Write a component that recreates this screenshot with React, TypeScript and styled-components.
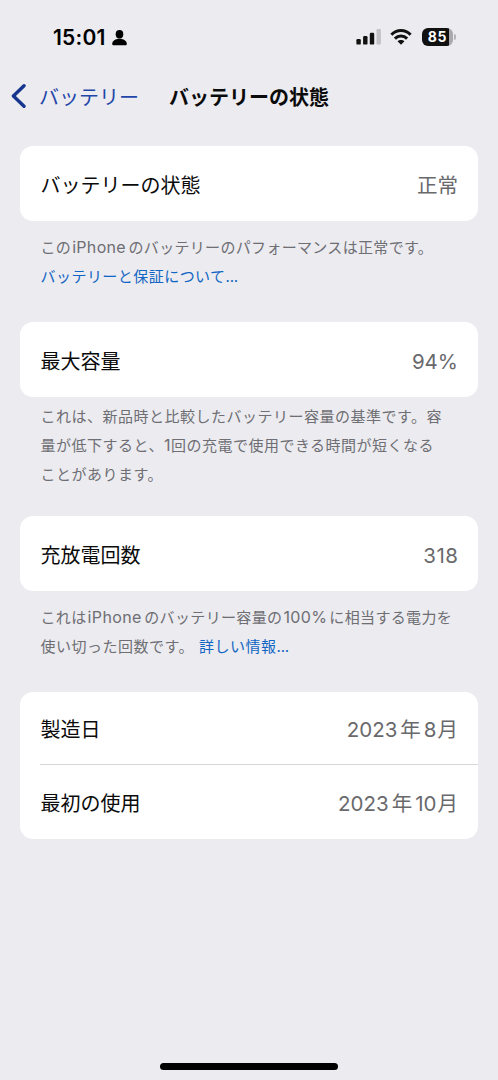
import React from 'react';
import styled, { createGlobalStyle } from 'styled-components';

const GlobalStyle = createGlobalStyle`
  * { box-sizing: border-box; }
  html, body { margin: 0; background: #ebebf0; }
  body {
    font-family: Inter, 'Noto Sans CJK JP', sans-serif;
    color: #0b0b0c;
  }
`;

const Screen = styled.div`
  width: 498px;
  height: 1080px;
  display: flex;
  flex-direction: column;
  background: #ebebf0;
  overflow: hidden;
`;

const StatusBar = styled.header`
  height: 74px;
  flex: none;
  display: flex;
  align-items: center;
  justify-content: space-between;
  padding: 0 42px 0 53px;
`;

const Clock = styled.div`
  display: flex;
  align-items: center;
  gap: 6px;
  padding-top: 1px;
  font-size: 21px;
  font-weight: 600;
  letter-spacing: 0.2px;
  line-height: 24px;
  color: #000;
`;

const StatusIcons = styled.div`
  display: flex;
  align-items: center;
  svg { display: block; }
`;

const WifiSlot = styled.div`
  margin-left: 9px;
`;

const BatteryBadge = styled.div`
  display: flex;
  align-items: center;
  gap: 1px;
  margin-left: 10px;
`;

const BatteryBody = styled.div`
  width: 31px;
  height: 18px;
  border-radius: 6px;
  display: flex;
  align-items: center;
  justify-content: center;
  background: linear-gradient(to right, #111 27px, #a9a9ad 27px);
  color: #fff;
  font-size: 14px;
  font-weight: 700;
  line-height: 18px;
  letter-spacing: 0.6px;
`;

const BatteryTip = styled.div`
  width: 2px;
  height: 6px;
  border-radius: 0 2px 2px 0;
  background: #b4b4b8;
`;

const NavBar = styled.nav`
  height: 44px;
  flex: none;
  display: flex;
  align-items: center;
  padding-left: 11px;
`;

const BackLink = styled.a`
  display: flex;
  align-items: center;
  gap: 13px;
  width: 158px;
  color: #1f46a8;
  font-size: 20px;
  line-height: 30px;
  white-space: nowrap;
  svg { display: block; flex: none; }
`;

const BackLabel = styled.span`
  padding-top: 3px;
`;

const Title = styled.h1`
  margin: 0;
  padding-top: 3px;
  font-size: 20px;
  font-weight: 700;
  line-height: 30px;
  white-space: nowrap;
  color: #0b0b0c;
`;

const Content = styled.main`
  flex: 1;
  padding: 28px 20px 0;
`;

const Section = styled.section<{ $after: number }>`
  margin-bottom: ${(p) => p.$after}px;
`;

const Card = styled.div`
  border-radius: 13px;
  background: #fff;
  padding-left: 20px;
`;

const Row = styled.div<{ $height: number; $divided?: boolean }>`
  height: ${(p) => p.$height}px;
  display: flex;
  align-items: center;
  justify-content: space-between;
  padding: 4px 20px 0 0.5px;
  border-bottom: ${(p) => (p.$divided ? '1px solid #d8d8da' : 'none')};
  font-size: 20px;
  line-height: 30px;
  white-space: nowrap;
`;

const Value = styled.span<{ $spacing?: number }>`
  color: #69696c;
  font-size: 20.5px;
  letter-spacing: ${(p) => p.$spacing ?? 0}px;
  margin-right: ${(p) => -(p.$spacing ?? 0)}px;
`;

const Note = styled.div<{ $top: number }>`
  padding: ${(p) => p.$top}px 0 0 20.5px;
  color: #6e6e73;
  font-size: 15px;
  line-height: 29px;
`;

const Line = styled.div<{ $spacing?: number }>`
  height: 29px;
  letter-spacing: ${(p) => p.$spacing ?? 0.5}px;
  white-space: nowrap;
`;

const Latin = styled.span<{ $before?: number; $after?: number; $size?: number }>`
  margin-left: ${(p) => p.$before ?? 0}px;
  margin-right: ${(p) => p.$after ?? 0}px;
  font-size: ${(p) => (p.$size ? `${p.$size}px` : 'inherit')};
`;

const Link = styled.a<{ $before?: number }>`
  margin-left: ${(p) => p.$before ?? 0}px;
  color: #1266c3;
`;

const Dots = styled.span`
  letter-spacing: -0.2px;
`;

const HomeIndicator = styled.div`
  flex: none;
  width: 178px;
  height: 7px;
  margin: 0 0 10px 160px;
  border-radius: 4px;
  background: #000;
`;

const PersonIcon = () => (
  <svg width="15" height="16" viewBox="0 0 15 16" fill="#000">
    <ellipse cx="7.5" cy="4.3" rx="3.8" ry="4.2" />
    <path d="M0.2 13.9C0.2 11 3.4 8.8 7.5 8.8s7.3 2.2 7.3 5.1c0 .9-.6 1.3-1.5 1.3H1.7C.8 15.2.2 14.8.2 13.9Z" />
  </svg>
);

const SignalIcon = () => (
  <svg width="25" height="16" viewBox="0 0 25 16" fill="#111">
    <rect x="0.4" y="10" width="4.4" height="5.6" rx="1.2" />
    <rect x="7.1" y="7" width="4.4" height="8.6" rx="1.2" />
    <rect x="13.8" y="3.7" width="4.4" height="11.9" rx="1.2" />
    <rect x="20.5" y="0" width="4.4" height="15.6" rx="1.2" fill="#c2c2c6" />
  </svg>
);

const WifiIcon = () => (
  <svg width="22" height="16" viewBox="0 0 22 16" fill="none" stroke="#111" strokeWidth="3">
    <path d="M1.4 5.8C6.7.2 15.3.2 20.6 5.8" />
    <path d="M4.9 9.6C8.3 6.2 13.7 6.2 17.1 9.6" />
    <path d="M11 15.8 7.5 12.3c1.9-1.8 5.1-1.8 7 0Z" fill="#111" stroke="none" />
  </svg>
);

const BackIcon = () => (
  <svg width="15" height="24" viewBox="0 0 15 24" fill="none">
    <path d="M13 1.8 2.4 12 13 22.2" stroke="#15358f" strokeWidth="3.4" strokeLinecap="round" strokeLinejoin="round" />
  </svg>
);

export default function App() {
  return (
    <Screen>
      <GlobalStyle />
      <StatusBar>
        <Clock>
          15:01
          <PersonIcon />
        </Clock>
        <StatusIcons>
          <SignalIcon />
          <WifiSlot>
            <WifiIcon />
          </WifiSlot>
          <BatteryBadge>
            <BatteryBody>85</BatteryBody>
            <BatteryTip />
          </BatteryBadge>
        </StatusIcons>
      </StatusBar>
      <NavBar>
        <BackLink>
          <BackIcon />
          <BackLabel>バッテリー</BackLabel>
        </BackLink>
        <Title>バッテリーの状態</Title>
      </NavBar>
      <Content>
        <Section $after={31}>
          <Card>
            <Row $height={75}>
              バッテリーの状態
              <Value>正常</Value>
            </Row>
          </Card>
          <Note $top={12}>
            <Line $spacing={0.32}>
              この<Latin $before={1} $after={2.5} $size={16}>iPhone</Latin>のバッテリーのパフォーマンスは正常です。
            </Line>
            <Line $spacing={0.46}><Link>バッテリーと保証について<Dots>...</Dots></Link></Line>
          </Note>
        </Section>
        <Section $after={27}>
          <Card>
            <Row $height={75}>
              最大容量
              <Value>94%</Value>
            </Row>
          </Card>
          <Note $top={5}>
            <Line>これは、新品時と比較したバッテリー容量の基準です。容</Line>
            <Line>量が低下すると、<Latin $size={16}>1</Latin>回の充電で使用できる時間が短くなる</Line>
            <Line>ことがあります。</Line>
          </Note>
        </Section>
        <Section $after={31}>
          <Card>
            <Row $height={75}>
              充放電回数
              <Value $spacing={0.5}>318</Value>
            </Row>
          </Card>
          <Note $top={12}>
            <Line $spacing={0.36}>
              これは<Latin $before={1} $after={2.5} $size={16}>iPhone</Latin>のバッテリー容量の
              <Latin $before={1} $after={2} $size={16}>100%</Latin>に相当する電力を
            </Line>
            <Line>使い切った回数です。<Link $before={5}>詳しい情報<Dots>...</Dots></Link></Line>
          </Note>
        </Section>
        <Section $after={0}>
          <Card>
            <Row $height={73} $divided>
              製造日
              <Value><Latin $after={3}>2023</Latin>年<Latin $before={3} $after={1}>8</Latin>月</Value>
            </Row>
            <Row $height={74}>
              最初の使用
              <Value><Latin $after={3}>2023</Latin>年<Latin $before={3} $after={1}>10</Latin>月</Value>
            </Row>
          </Card>
        </Section>
      </Content>
      <HomeIndicator />
    </Screen>
  );
}
